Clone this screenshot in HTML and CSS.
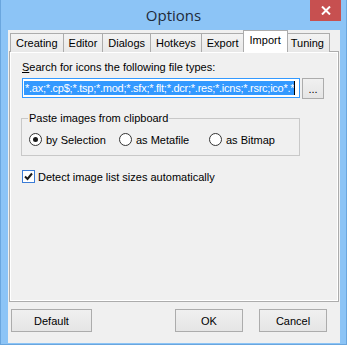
FILE: index.html
```html
<!DOCTYPE html>
<html>

<head>
    <link rel="stylesheet" href="styles.css">
</head>

<body>
    <div class="window">
        <div class="titlebar">
            <span></span>
            <span class="title">Options</span>
            <button type="button" class="close">
                <svg width="10" height="9" viewBox="0 0 10 9">
                    <path d="M1 0.5 L9 8.5 M9 0.5 L1 8.5" stroke="#fff" stroke-width="2" fill="none"/>
                </svg>
            </button>
        </div>
        <div class="client">
            <div class="tabs">
                <div class="tab">Creating</div>
                <div class="tab">Editor</div>
                <div class="tab">Dialogs</div>
                <div class="tab">Hotkeys</div>
                <div class="tab">Export</div>
                <div class="tab selected">Import</div>
                <div class="tab">Tuning</div>
            </div>
            <div class="panel">
                <div class="label"><u>S</u>earch for icons the following file types:</div>
                <div class="filerow">
                    <div class="textbox"><span class="sel">*.ax;*.cp$;*.tsp;*.mod;*.sfx;*.flt;*.dcr;*.res;*.icns;*.rsrc;ico*.*</span><span class="caret"></span></div>
                    <button type="button" class="btn small">...</button>
                </div>
                <fieldset class="group">
                    <legend>Paste images from clipboard</legend>
                    <label class="radio r1"><span class="dot checked"></span>by Selection</label>
                    <label class="radio r2"><span class="dot"></span>as Metafile</label>
                    <label class="radio r3"><span class="dot"></span>as Bitmap</label>
                </fieldset>
                <label class="check">
                    <span class="box">
                        <svg width="11" height="11" viewBox="0 0 11 11">
                            <path d="M2 5.5 L4.5 8 L9 2.5" stroke="#1a1a1a" stroke-width="2" fill="none"/>
                        </svg>
                    </span>
                    Detect image list sizes automatically
                </label>
            </div>
            <div class="buttons">
                <button type="button" class="btn default">Default</button>
                <span class="spacer"></span>
                <button type="button" class="btn">OK</button>
                <button type="button" class="btn">Cancel</button>
            </div>
        </div>
    </div>
</body>

</html>
```

FILE: styles.css
```css
body {
    margin: 0;
    font-family: "Liberation Sans", Arial, sans-serif;
    font-size: 11px;
    color: #000;
}

.window {
    width: 347px;
    height: 345px;
    box-sizing: border-box;
    background-color: #8cc4f6;
    border: 1px solid #6aa6de;
    border-top: none;
    display: flex;
    flex-direction: column;
}

.titlebar {
    height: 30px;
    display: grid;
    grid-template-columns: 1fr auto 1fr;
}

.title {
    font-family: "Open Sans", "Noto Sans", sans-serif;
    font-size: 15px;
    color: #1e2a3a;
    line-height: 30px;
}

.close {
    justify-self: end;
    align-self: start;
    width: 31px;
    height: 21px;
    margin-right: 5px;
    padding: 0;
    border: none;
    background-color: #c75050;
    display: flex;
    align-items: center;
    justify-content: center;
}

.client {
    flex: 1;
    margin: 0 6px 1px 7px;
    background-color: #f0f0f0;
    display: flex;
    flex-direction: column;
}

.tabs {
    display: flex;
    align-items: flex-end;
    height: 21px;
    margin: 1px 0 0 2px;
    position: relative;
    z-index: 1;
}

.tab {
    height: 18px;
    line-height: 18px;
    padding: 0 5px;
    border: 1px solid #acacac;
    border-bottom: none;
    border-left: none;
    background: linear-gradient(#f3f3f3, #e8e8e8);
}

.tab:first-child {
    border-left: 1px solid #acacac;
}

.tab.selected {
    height: 21px;
    line-height: 19px;
    padding: 0 6px;
    margin: 0 -2px 0 -2px;
    border-left: 1px solid #acacac;
    background: #fff;
    position: relative;
}

.panel {
    height: 251px;
    box-sizing: border-box;
    margin: -1px 1px 0 1px;
    border: 1px solid #acacac;
    box-shadow: inset 0 0 0 1px #fff;
    padding: 9px 14px 0 12px;
}

.label {
    line-height: 13px;
}

.filerow {
    display: flex;
    gap: 2px;
    margin-top: 4px;
}

.textbox {
    width: 278px;
    height: 20px;
    flex: none;
    box-sizing: border-box;
    border: 1px solid #3399ff;
    background: #fff;
    padding: 2px 1px;
    white-space: nowrap;
    overflow: hidden;
    display: flex;
}

.sel {
    background-color: #3399ff;
    color: #fff;
    line-height: 14px;
    padding-left: 1px;
    letter-spacing: -0.25px;
    flex: none;
}

.caret {
    width: 1px;
    flex: none;
    background: #000;
}

.btn {
    font-family: "Liberation Sans", Arial, sans-serif;
    font-size: 11px;
    color: #000;
    border: 1px solid #acacac;
    background: linear-gradient(#f0f0f0, #e5e5e5);
    padding: 0;
    width: 68px;
    height: 23px;
}

.btn.small {
    width: 22px;
    height: 21px;
    line-height: 10px;
    flex: none;
}

.btn.default {
    width: 81px;
}

.group {
    margin: 13px 0 0 -1px;
    width: 279px;
    height: 44px;
    box-sizing: border-box;
    border: 1px solid #c8c8c8;
    padding: 9px 0 0 7px;
    display: flex;
    align-items: flex-start;
}

.group legend {
    padding: 0 1px;
    margin-left: -1px;
    line-height: 12px;
}

.radio {
    display: flex;
    align-items: center;
    gap: 4px;
}

.r1 { width: 90px; }
.r2 { width: 90px; }

.dot {
    width: 11px;
    height: 11px;
    border: 1px solid #333;
    border-radius: 50%;
    background: #fff;
    display: flex;
    align-items: center;
    justify-content: center;
}

.dot.checked::after {
    content: "";
    width: 5px;
    height: 5px;
    border-radius: 50%;
    background: #1a1a1a;
}

.check {
    display: flex;
    align-items: center;
    gap: 3px;
    margin-top: 14px;
}

.box {
    width: 11px;
    height: 11px;
    border: 1px solid #3a7bd5;
    background: #fff;
    display: flex;
    align-items: center;
    justify-content: center;
}

.buttons {
    display: flex;
    gap: 16px;
    margin: 7px 13px 0 3px;
}

.spacer {
    flex: 1;
}
```
